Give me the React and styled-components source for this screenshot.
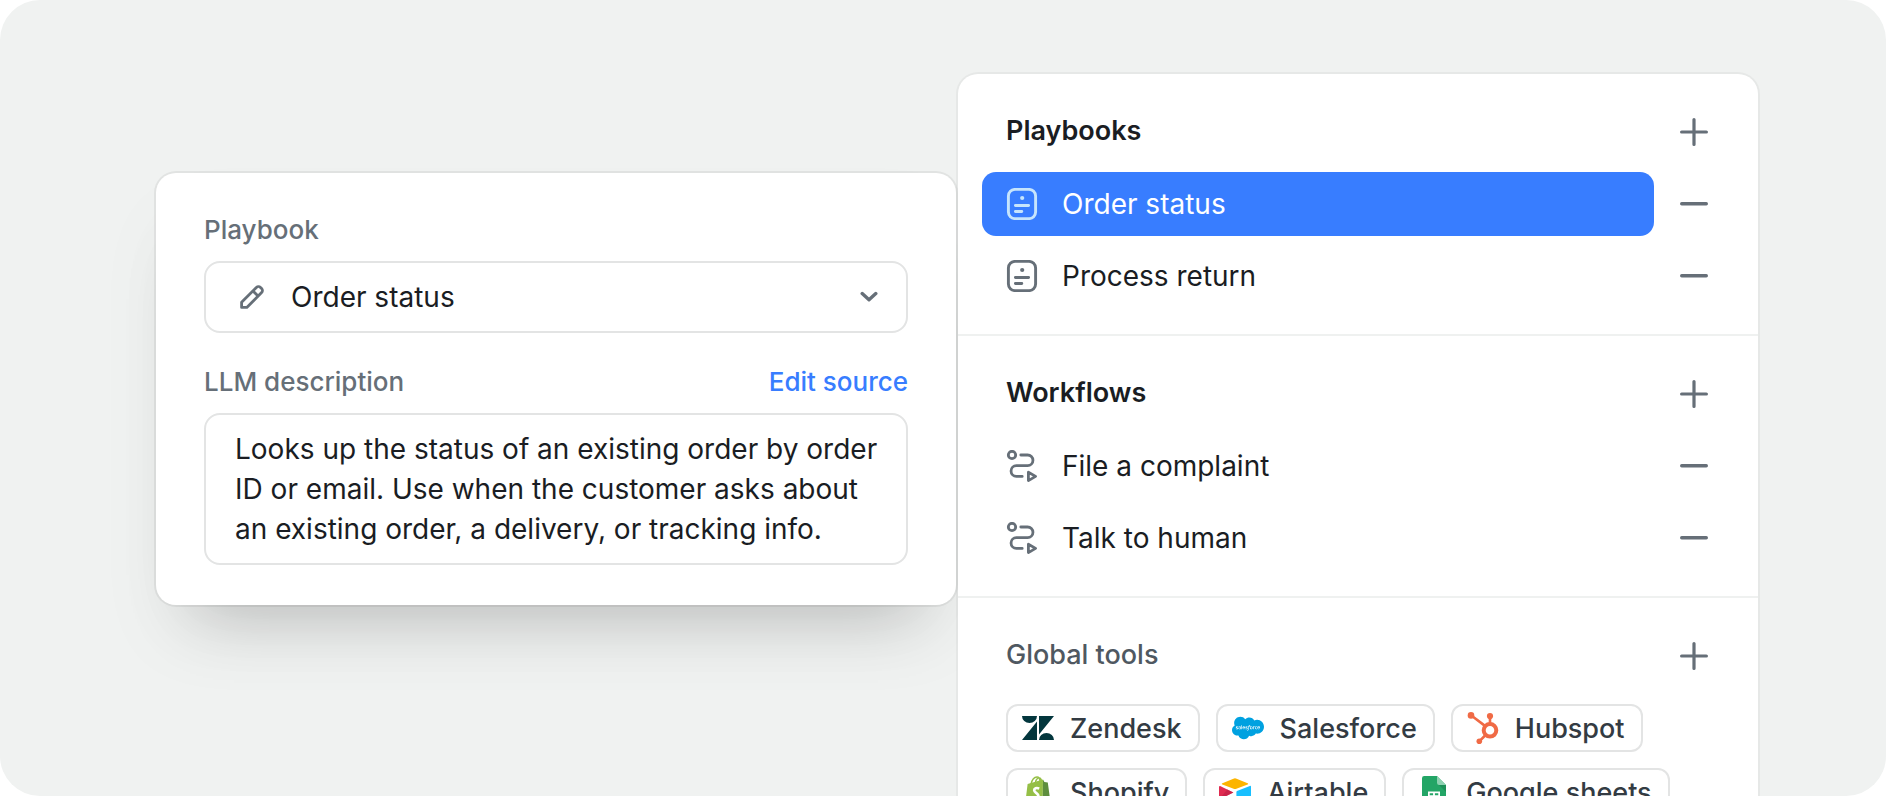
import React, { useState } from "react";
import styled, { createGlobalStyle } from "styled-components";
import { FaSalesforce } from "react-icons/fa";

const GlobalStyle = createGlobalStyle`
  *, *::before, *::after { box-sizing: border-box; }
  body {
    margin: 0;
    background: #fff;
    color: #1a1d23;
    font-family: Inter, "Liberation Sans", sans-serif;
    font-size: 28px;
    -webkit-font-smoothing: antialiased;
  }
  h2, ul, p { margin: 0; padding: 0; }
  button, select, textarea { font: inherit; color: inherit; }
  svg { display: block; flex: none; }
`;

const Canvas = styled.main`
  display: grid;
  grid-template-columns: repeat(2, minmax(0, 1fr));
  align-items: start;
  gap: 2px;
  height: 100vh;
  padding: 74px 128px 0 156px;
  overflow: hidden;
  border-radius: 40px;
  background: #f0f2f1;
`;

const EditorCard = styled.form`
  margin-top: 99px;
  padding: 40px 48px;
  border-radius: 20px;
  background: #fff;
  box-shadow:
    0 0 0 2px rgba(0, 0, 0, 0.06),
    0 40px 80px rgba(0, 0, 0, 0.03),
    0 48px 64px -40px rgba(0, 0, 0, 0.22);
`;

const Field = styled.div`
  & + & { margin-top: 32px; }
`;

const FieldHeader = styled.div`
  display: flex;
  justify-content: space-between;
  margin-bottom: 14px;
  font-size: 26px;
  font-weight: 500;
  line-height: 34px;
`;

const Label = styled.label`
  color: #666f78;
`;

const SourceLink = styled.a`
  color: #387dff;
  text-decoration: none;
`;

const SelectBox = styled.div`
  display: grid;
  grid-template-columns: auto 1fr auto;
  align-items: center;
  height: 72px;
  border: 2px solid #e3e4e4;
  border-radius: 16px;
  color: #666f78;

  svg {
    grid-row: 1;
    pointer-events: none;
  }
  svg:first-child { grid-column: 1; margin-left: 34px; }
  svg:last-child { grid-column: 3; margin-right: 28px; }
`;

const Select = styled.select`
  grid-row: 1;
  grid-column: 1 / -1;
  width: 100%;
  height: 100%;
  padding: 0 64px 0 85px;
  border: 0;
  border-radius: 14px;
  background: transparent;
  color: #1a1d23;
  appearance: none;
`;

const TextArea = styled.textarea`
  display: block;
  width: 100%;
  height: 152px;
  padding: 14px 24px 14px 29px;
  border: 2px solid #e3e4e4;
  border-radius: 16px;
  background: #fff;
  line-height: 40px;
  resize: none;
  overflow: hidden;
`;

const Panel = styled.aside`
  border-radius: 20px;
  background: #fff;
  box-shadow: 0 0 0 2px rgba(0, 0, 0, 0.04);
`;

const Section = styled.section`
  padding: 32px 48px 26px;
  border-bottom: 2px solid #eff1f0;
`;

const SectionHeader = styled.header`
  display: flex;
  justify-content: space-between;
  align-items: flex-start;
  height: 52px;
  margin-bottom: 14px;
`;

const SectionTitle = styled.h2`
  font-size: 27px;
  font-weight: ${(p) => (p.$muted ? 500 : 600)};
  line-height: 50px;
  color: ${(p) => (p.$muted ? "#4f5861" : "#1a1d23")};
`;

const IconButton = styled.button`
  display: grid;
  place-items: center;
  width: 32px;
  height: 52px;
  padding: 0;
  border: 0;
  background: none;
  color: #666f78;
  cursor: pointer;
`;

const ItemList = styled.ul`
  display: grid;
  gap: 8px;
  list-style: none;
`;

const Item = styled.li`
  display: flex;
  align-items: center;
  gap: 24px;
  margin-left: -24px;
`;

const ItemButton = styled.button`
  display: flex;
  flex: 1;
  align-items: center;
  gap: 24px;
  height: 64px;
  padding: 0 24px;
  border: 0;
  border-radius: 14px;
  background: ${(p) => (p.$active ? "#387dff" : "transparent")};
  color: ${(p) => (p.$active ? "#fff" : "#1a1d23")};
  text-align: left;
  cursor: pointer;

  svg { color: ${(p) => (p.$active ? "#c6e4fc" : "#666f78")}; }
`;

const ChipList = styled.ul`
  display: flex;
  flex-wrap: wrap;
  gap: 16px;
  padding-top: 8px;
  list-style: none;
`;

const Chip = styled.li`
  display: flex;
  align-items: center;
  gap: 16px;
  height: 48px;
  padding: 0 16px 0 14px;
  border: 2px solid #e3e4e4;
  border-radius: 12px;
  color: #333b43;
  font-size: 27px;
  font-weight: 500;
`;

const PencilIcon = () => (
  <svg width="24" height="24" viewBox="0 0 24 24" fill="none" stroke="currentColor" strokeWidth="2.8" strokeLinejoin="round">
    <path d="M1.6 22.4v-5.2L16.4 2.4a2.9 2.9 0 0 1 4.1 0l1.1 1.1a2.9 2.9 0 0 1 0 4.1L6.8 22.4z" />
    <path d="M13.2 6.2l4.6 4.6" />
  </svg>
);

const ChevronIcon = () => (
  <svg width="18" height="12" viewBox="0 0 18 12" fill="none" stroke="currentColor" strokeWidth="3.4" strokeLinecap="round" strokeLinejoin="round">
    <path d="M2.2 2.6L9 8.800l6.8-6.2" />
  </svg>
);

const PlusIcon = () => (
  <svg width="28" height="28" viewBox="0 0 28 28" fill="none" stroke="currentColor" strokeWidth="3.2" strokeLinecap="round">
    <path d="M1.600 14h24.800M14 1.600v24.800" />
  </svg>
);

const MinusIcon = () => (
  <svg width="28" height="28" viewBox="0 0 28 28" fill="none" stroke="currentColor" strokeWidth="3.4" strokeLinecap="round">
    <path d="M1.700 13.700h24.600" />
  </svg>
);

const PlaybookIcon = () => (
  <svg width="32" height="32" viewBox="0 0 32 32" fill="none" stroke="currentColor" strokeWidth="2.9" strokeLinecap="round">
    <rect x="2.4" y="1.4" width="27.2" height="29.2" rx="6.6" />
    <path d="M9.4 17.5h13.2M9.4 23.5h6.4" />
    <circle cx="16.2" cy="10" r="2.1" fill="currentColor" stroke="none" />
  </svg>
);

const WorkflowIcon = () => (
  <svg width="32" height="32" viewBox="0 0 32 32" fill="none" stroke="currentColor" strokeWidth="2.8" strokeLinecap="round" strokeLinejoin="round">
    <circle cx="6" cy="5" r="3.7" />
    <path d="M14.8 5h6.8a5.35 5.35 0 0 1 0 10.7H10.4a5.35 5.35 0 0 0 0 10.7h5.8" />
    <path d="M22.4 22.2v8.4l7.2-4.2z" />
  </svg>
);

const ZendeskLogo = () => (
  <svg width="32" height="24" viewBox="0 0 32 24" fill="#03363d">
    <path d="M0 0h15a7.5 7 0 0 1-15 0zM15 5.6V24H0zM17 0h15L17 18.4zM17 24a7.5 7 0 0 1 15 0z" />
  </svg>
);

const HubspotLogo = () => (
  <svg width="32" height="32" viewBox="0 0 32 32" fill="#f06a45" stroke="#f06a45">
    <path d="M4 3.3l14 10.6M23 4v8M18.6 23l-6.3 6.3" strokeWidth="2.6" />
    <circle cx="23" cy="18.3" r="6.3" fill="none" strokeWidth="4" />
    <circle cx="4" cy="3.4" r="3.3" stroke="none" />
    <circle cx="23" cy="4" r="3.1" stroke="none" />
    <circle cx="12.3" cy="29.2" r="2.8" stroke="none" />
  </svg>
);

const ShopifyLogo = () => (
  <svg width="32" height="32" viewBox="0 0 32 32" fill="none">
    <path d="M5.6 8L21 3.6 20.6 32 3 28.9z" fill="#95bf47" />
    <path d="M21 3.6l1.4 2.4 3.4.4L29 30.2 20.6 32z" fill="#5e8e3e" />
    <path d="M9 8.2C10 3.6 12.6 1 15 1c2 0 3 2.4 3 5.2M13.4 7c.2-3 2-5.3 4-5.1 1.4.2 2 1.9 2.2 3.4" stroke="#95bf47" strokeWidth="1.4" />
    <path d="M17.2 12.6c-2.8-1.3-5-.2-5 1.7 0 2.5 4.2 2.8 4.2 6 0 2.7-2.9 3.6-6 1.7" stroke="#fff" strokeWidth="2.7" />
  </svg>
);

const AirtableLogo = () => (
  <svg width="32" height="32" viewBox="0 0 32 32">
    <path d="M14.4 2.7L3.4 7.2c-.8.3-.8 1.1 0 1.4l11.2 4.2a4 4 0 0 0 2.8 0l11.2-4.2c.8-.3.8-1.1 0-1.4L17.6 2.7a4 4 0 0 0-3.2 0z" fill="#fcb400" />
    <path d="M17.4 15.8v12.8c0 .6.6.9 1.1.7l12.800-5c.4-.2.700-.5.700-.8V10.600c0-.6-.6-.9-1.100-.7L18 15z" fill="#18bfff" />
    <path d="M14.4 16.4L1.1 10c-.5-.2-1.1.1-1.1.7v12c0 .5.5.9 1 .7z" fill="#e02b50" />
    <path d="M14.4 16.4L10.6 18.3.3 23.2l8-9.700z" fill="#ba1e45" fillOpacity=".6" />
  </svg>
);

const SheetsLogo = () => (
  <svg width="32" height="32" viewBox="0 0 32 32">
    <path d="M6.2 0H19l9 9v20.8a2.2 2.2 0 0 1-2.2 2.2H6.2A2.2 2.2 0 0 1 4 29.8V2.2A2.2 2.2 0 0 1 6.2 0z" fill="#23a566" />
    <path d="M19 0l9 9h-6.8A2.2 2.2 0 0 1 19 6.8z" fill="#8ed1b1" />
    <path d="M21 9h7v7z" fill="#1c8f57" />
    <path d="M10 15.6h12v10.8H10zM11.7 17.3v2h3.4v-2zM16.9 17.3v2h3.4v-2zM11.7 20.900v1.4h3.4v-1.400zM16.900 20.900v1.400h3.400v-1.400zM11.700 23.800v1h3.400v-1zM16.900 23.800v1h3.400v-1z" fill="#fff" fillRule="evenodd" />
  </svg>
);

const SalesforceLogo = () => <FaSalesforce color="#00a1e0" size={32} />;

const SECTIONS = [
  { title: "Playbooks", icon: PlaybookIcon, items: ["Order status", "Process return"] },
  { title: "Workflows", icon: WorkflowIcon, items: ["File a complaint", "Talk to human"] },
];

const TOOLS = [
  { name: "Zendesk", logo: ZendeskLogo },
  { name: "Salesforce", logo: SalesforceLogo },
  { name: "Hubspot", logo: HubspotLogo },
  { name: "Shopify", logo: ShopifyLogo },
  { name: "Airtable", logo: AirtableLogo },
  { name: "Google sheets", logo: SheetsLogo },
];

const DESCRIPTION =
  "Looks up the status of an existing order by order ID or email. Use when the customer asks about an existing order, a delivery, or tracking info.";

function PlaybookEditor() {
  return (
    <EditorCard>
      <Field>
        <FieldHeader>
          <Label htmlFor="playbook">Playbook</Label>
        </FieldHeader>
        <SelectBox>
          <PencilIcon />
          <Select id="playbook" defaultValue="Order status">
            <option>Order status</option>
            <option>Process return</option>
          </Select>
          <ChevronIcon />
        </SelectBox>
      </Field>
      <Field>
        <FieldHeader>
          <Label htmlFor="description">LLM description</Label>
          <SourceLink href="#source">Edit source</SourceLink>
        </FieldHeader>
        <TextArea id="description" spellCheck={false} defaultValue={DESCRIPTION} />
      </Field>
    </EditorCard>
  );
}

function PanelHeader({ title, muted }) {
  return (
    <SectionHeader>
      <SectionTitle $muted={muted}>{title}</SectionTitle>
      <IconButton type="button" aria-label={`Add to ${title}`}>
        <PlusIcon />
      </IconButton>
    </SectionHeader>
  );
}

export default function App() {
  const [active, setActive] = useState("Order status");

  return (
    <>
      <GlobalStyle />
      <Canvas>
        <PlaybookEditor />
        <Panel>
          {SECTIONS.map(({ title, icon: Icon, items }) => (
            <Section key={title}>
              <PanelHeader title={title} />
              <ItemList>
                {items.map((item) => (
                  <Item key={item}>
                    <ItemButton type="button" $active={item === active} onClick={() => setActive(item)}>
                      <Icon />
                      {item}
                    </ItemButton>
                    <IconButton type="button" aria-label={`Remove ${item}`}>
                      <MinusIcon />
                    </IconButton>
                  </Item>
                ))}
              </ItemList>
            </Section>
          ))}
          <Section>
            <PanelHeader title="Global tools" muted />
            <ChipList>
              {TOOLS.map(({ name, logo: Logo }) => (
                <Chip key={name}>
                  <Logo />
                  {name}
                </Chip>
              ))}
            </ChipList>
          </Section>
        </Panel>
      </Canvas>
    </>
  );
}
